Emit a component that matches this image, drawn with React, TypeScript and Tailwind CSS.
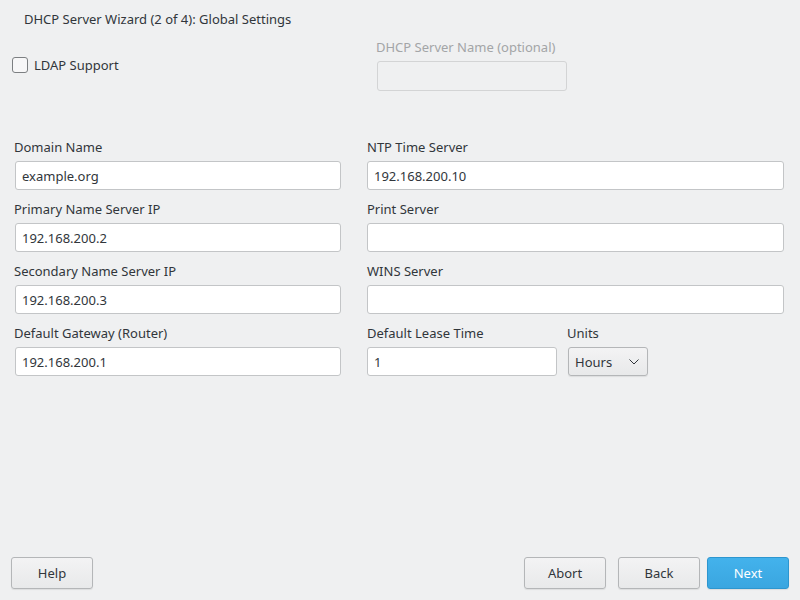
import React from 'react';

const font = { fontFamily: '"Noto Sans", "Open Sans", sans-serif' };

const Field: React.FC<{ label: string; value?: string; className?: string; inset?: boolean }> = ({
  label,
  value = '',
  className = '',
  inset = true,
}) => (
  <div className={`flex flex-col ${className}`}>
    <div className="h-[18px] leading-[18px] text-[13px] text-[#31363b]">{label}</div>
    <div
      className={`mt-[5px] h-[29px] rounded-[3px] border border-[#c3c5c7] bg-white px-[6px] pt-px text-[13px] leading-[27px] text-[#31363b] ${
        inset ? 'ml-px' : ''
      }`}
    >
      {value}
    </div>
  </div>
);

const Btn: React.FC<{ children: React.ReactNode; primary?: boolean }> = ({ children, primary }) => (
  <button
    className={`h-[32px] w-[82px] rounded-[3px] border pt-px text-[13px] shadow-[0_1px_1px_rgba(0,0,0,0.08)] ${
      primary
        ? 'border-[#2d96cf] bg-gradient-to-b from-[#43b2ec] to-[#3aa6e0] text-white'
        : 'border-[#b4b6b8] bg-gradient-to-b from-[#f3f3f4] to-[#e8e9ea] text-[#31363b]'
    }`}
  >
    {children}
  </button>
);

export default function App() {
  return (
    <div className="flex h-[600px] w-[800px] flex-col bg-[#eff0f1] text-[#31363b]" style={font}>
      <div className="pl-[24px] pt-[10px] text-[13px] leading-[18px]">DHCP Server Wizard (2 of 4): Global Settings</div>

      {/* top row */}
      <div className="mt-[10px] flex">
        <label className="ml-[12px] mt-[19px] flex h-[16px] w-[350px] items-center gap-[6px] text-[13px]">
          <span className="h-[16px] w-[16px] rounded-[3px] border border-[#7c7f82] bg-[#f7f7f8]" />
          <span className="pt-[2px]">LDAP Support</span>
        </label>
        <div className="ml-[14px] flex flex-col">
          <div className="h-[18px] text-[13px] leading-[18px] text-[#a3a5a7]">DHCP Server Name (optional)</div>
          <div className="mt-[5px] ml-px h-[30px] w-[190px] rounded-[3px] border border-[#d3d4d5] bg-[#eff0f1]" />
        </div>
      </div>

      {/* fields */}
      <div className="mt-[47px] grid grid-cols-[327px_417px] gap-x-[26px] gap-y-[10px] pl-[14px]">
        <Field label="Domain Name" value="example.org" />
        <Field label="NTP Time Server" value="192.168.200.10" inset={false} />
        <Field label="Primary Name Server IP" value="192.168.200.2" />
        <Field label="Print Server" inset={false} />
        <Field label="Secondary Name Server IP" value="192.168.200.3" />
        <Field label="WINS Server" inset={false} />
        <Field label="Default Gateway (Router)" value="192.168.200.1" />
        <div className="flex gap-[10px]">
          <Field label="Default Lease Time" value="1" className="w-[190px]" inset={false} />
          <div className="flex flex-col">
            <div className="h-[18px] text-[13px] leading-[18px]">Units</div>
            <div className="mt-[5px] ml-px flex h-[29px] w-[80px] items-center justify-between rounded-[3px] border border-[#b4b6b8] bg-gradient-to-b from-[#f3f3f4] to-[#e8e9ea] pl-[6px] pr-[8px] text-[13px] shadow-[0_1px_1px_rgba(0,0,0,0.08)]">
              <span className="pt-[3px]">Hours</span>
              <svg width="10" height="6" viewBox="0 0 10 6" fill="none" stroke="#31363b" strokeWidth="1">
                <path d="M0.5 0.5 L5 5 L9.5 0.5" />
              </svg>
            </div>
          </div>
        </div>
      </div>

      <div className="flex-1" />

      {/* buttons */}
      <div className="flex items-center pb-[11px] pl-[11px] pr-[11px]">
        <Btn>Help</Btn>
        <div className="flex-1" />
        <Btn>Abort</Btn>
        <div className="w-[12px]" />
        <Btn>Back</Btn>
        <div className="w-[7px]" />
        <Btn primary>Next</Btn>
      </div>
    </div>
  );
}
